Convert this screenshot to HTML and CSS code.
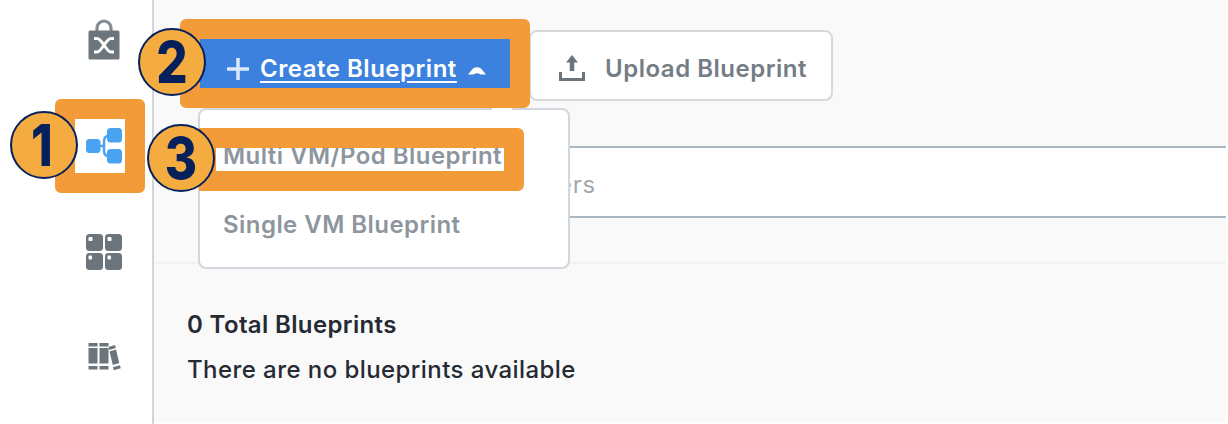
FILE: index.html
```html
<!DOCTYPE html>
<html lang="en">
<head>
  <meta charset="UTF-8">
  <title>Blueprints</title>
  <link rel="stylesheet" href="styles.css">
</head>
<body>

<div class="sidebar">
  <a class="nav-item">
    <svg width="34" height="42" viewBox="0 0 34 42">
      <path d="M10 13V9a7 7 0 0 1 14 0v4" fill="none" stroke="#848c91" stroke-width="3.200"/>
      <rect x="1.500" y="11.500" width="31" height="29" rx="1.500" fill="#6c757b"/>
      <path d="M7 19.500H10Q12.500 19.500 17 26 21.500 19.500 24 19.500H27M7 33H10Q12.500 33 17 26 21.500 33 24 33H27" fill="none" stroke="#fff" stroke-width="3"/>
    </svg>
  </a>
  <a class="nav-item active">
    <svg width="38" height="38" viewBox="0 0 38 38">
      <path d="M14 19H20M28 8H25Q19 9 19 14V24Q19 29 25 30H28" fill="none" stroke="#4aa3f1" stroke-width="2.500"/>
      <rect x="1" y="12" width="14.500" height="14" rx="3.500" fill="#4aa3f1"/>
      <rect x="22" y="1" width="15" height="14.500" rx="3.500" fill="#4aa3f1"/>
      <rect x="22" y="22" width="15" height="14.500" rx="3.500" fill="#4aa3f1"/>
    </svg>
    <span class="highlight highlight-nav"></span>
    <span class="step step-1"><b>1</b></span>
  </a>
  <a class="nav-item">
    <svg width="38" height="38" viewBox="0 0 38 38">
      <g fill="#6c757b">
        <rect x="1" y="1" width="17" height="17" rx="3.500"/>
        <rect x="20" y="1" width="17" height="17" rx="3.500"/>
        <rect x="1" y="20" width="17" height="17" rx="3.500"/>
        <rect x="20" y="20" width="17" height="17" rx="3.500"/>
      </g>
      <g fill="#fff">
        <rect x="3.500" y="4" width="4" height="4" rx="1"/>
        <rect x="22.500" y="4" width="4" height="4" rx="1"/>
        <rect x="3.500" y="22.500" width="3.500" height="4" rx="1"/>
        <rect x="22.500" y="22.500" width="3.500" height="4" rx="1"/>
      </g>
    </svg>
  </a>
  <a class="nav-item">
    <svg width="34" height="30" viewBox="0 0 34 30">
      <g fill="#6c757b">
        <path d="M1.500 2h9v3.500h-9zM1.500 7h9v15.500h-9zM1.500 25h9v3.500h-9z"/>
        <path d="M12.500 2h9v3.500h-9zM12.500 7h9v15.500h-9zM12.500 25h9v3.500h-9z"/>
        <path d="M21.500 6l6.500-2 .8 3-6.500 2zM22.500 10.500l6.500-2 3.300 13.500-6.500 2zM26 26.300l7-2 .8 3-7 2z"/>
      </g>
    </svg>
  </a>
</div>

<div class="content">
  <div class="toolbar">
    <div class="buttons">
      <div class="create">
        <button class="btn-create">
          <svg width="24" height="24" viewBox="0 0 24 24"><path d="M12 1v22M1 12h22" stroke="#dce9fa" stroke-width="3.500"/></svg>
          <span class="label">Create Blueprint</span>
          <svg class="caret" width="18" height="8" viewBox="0 0 18 8"><path d="M0 7.500L5 1.500Q9-1 13 1.500L18 7.500H12.500Q9 5 5.500 7.500Z" fill="#fff"/></svg>
        </button>
        <div class="menu">
          <div class="menu-item menu-multi">Multi VM/Pod Blueprint</div>
          <div class="menu-item">Single VM Blueprint</div>
          <span class="highlight highlight-menu"></span>
          <span class="step step-3"><b>3</b></span>
        </div>
        <span class="highlight highlight-create"></span>
        <span class="step step-2"><b>2</b></span>
      </div>
      <button class="btn-upload">
        <svg width="28" height="28" viewBox="0 0 28 28">
          <path d="M2.500 18V25.500H25.500V18" fill="none" stroke="#6c757b" stroke-width="3"/>
          <path d="M14 17V6" stroke="#6c757b" stroke-width="4.500"/>
          <path d="M8 8.500L14 1l6 7.500z" fill="#6c757b"/>
        </svg>
        <span>Upload Blueprint</span>
      </button>
    </div>
    <div class="search">ers</div>
  </div>
  <div class="list">
    <div class="total">0 Total Blueprints</div>
    <div class="empty">There are no blueprints available</div>
  </div>
</div>

</body>
</html>
```

FILE: styles.css
```css
* {
  box-sizing: border-box;
}
body {
  font-family: Inter, "Liberation Sans", sans-serif;
  margin: 0;
  height: 424px;
  background: #fff;
  display: flex;
  overflow: hidden;
}
svg {
  display: block;
}
.sidebar {
  width: 154px;
  height: 424px;
  background: #fff;
  border-right: 2px solid #d2d6dc;
  padding-left: 56px;
}
.nav-item {
  position: relative;
  display: flex;
  align-items: center;
  justify-content: center;
  height: 106px;
}
.nav-item:first-child {
  height: 93px;
  padding-bottom: 14px;
}
.nav-item:last-child {
  height: 102px;
}
.content {
  width: 1072px;
  height: 422px;
  background: #f9f9f9;
}
.toolbar {
  height: 264px;
  padding-top: 30px;
  border-bottom: 2px solid #f1f2f3;
}
.buttons {
  display: flex;
  padding-left: 45px;
}
.create {
  position: relative;
  width: 330px;
  height: 71px;
}
button {
  font-family: inherit;
  font-size: 24px;
  font-weight: 600;
  letter-spacing: 0.52px;
  display: flex;
  align-items: center;
}
.btn-create {
  width: 312px;
  height: 71px;
  padding: 6px 0 0 27px;
  border: none;
  border-radius: 8px;
  background: #3d81df;
  color: #fff;
}
.btn-create .label {
  margin: 0 11px 0 10px;
  text-decoration: underline;
  text-decoration-thickness: 2px;
  text-underline-offset: 4px;
}
.btn-create .caret {
  margin-top: 4px;
}
.btn-upload {
  width: 304px;
  height: 71px;
  padding: 5px 0 0 27px;
  gap: 19px;
  border: 2px solid #d5d9de;
  border-radius: 8px;
  background: #fff;
  color: #747c84;
}
.menu {
  position: absolute;
  z-index: 2;
  left: -1px;
  top: 78px;
  width: 372px;
  height: 161px;
  padding: 31px 0 0 23px;
  background: #fff;
  border: 2px solid #d3d7dd;
  border-radius: 8px;
}
.menu-item {
  line-height: 30px;
  font-size: 24px;
  font-weight: 600;
  letter-spacing: 0.45px;
  color: #8d959e;
}
.menu-multi {
  margin-bottom: 39px;
}
/* gap where the button caret meets the menu */
.menu::before {
  content: "";
  position: absolute;
  left: 292px;
  top: -2px;
  width: 20px;
  height: 2px;
  background: #fff;
}
.search {
  height: 72px;
  margin: 45px 0 0 45px;
  padding: 4px 0 0 357px;
  line-height: 66px;
  background: #fff;
  border: 2px solid #a9b8c0;
  border-right: none;
  border-radius: 8px 0 0 8px;
  font-size: 24px;
  letter-spacing: 0.7px;
  color: #a4a8ac;
}
.list {
  padding: 45px 0 0 33px;
  font-size: 24px;
  line-height: 32px;
  color: #252a33;
}
.total {
  font-weight: 600;
  letter-spacing: 0.36px;
  margin-bottom: 13px;
}
.empty {
  font-weight: 500;
  letter-spacing: 0.43px;
}

/* walkthrough markers */
.highlight {
  position: absolute;
  border: 20px solid #f29b38;
  border-radius: 6px;
}
.highlight-nav {
  left: -1px;
  top: 6px;
  width: 90px;
  height: 94px;
}
.highlight-create {
  z-index: 3;
  left: -19px;
  top: -11px;
  width: 350px;
  height: 89px;
}
.highlight-menu {
  left: -1px;
  top: 18px;
  width: 325px;
  height: 63px;
  border-left-width: 17px;
  border-radius: 0 6px 6px 0;
}
.step {
  position: absolute;
  z-index: 4;
  width: 68px;
  height: 68px;
  border: 2px solid #06205c;
  border-radius: 50%;
  background: #f4ac41;
  color: #06205c;
  font-size: 58px;
  line-height: 64px;
  text-align: center;
}
.step b {
  display: block;
  font-weight: 800;
  transform: scaleX(0.85);
}
.step-1 {
  left: -46px;
  top: 18px;
}
.step-1 b {
  margin-left: -4px;
}
.step-2 {
  left: -61px;
  top: -2px;
}
.step-3 {
  left: -53px;
  top: 14px;
}
```
